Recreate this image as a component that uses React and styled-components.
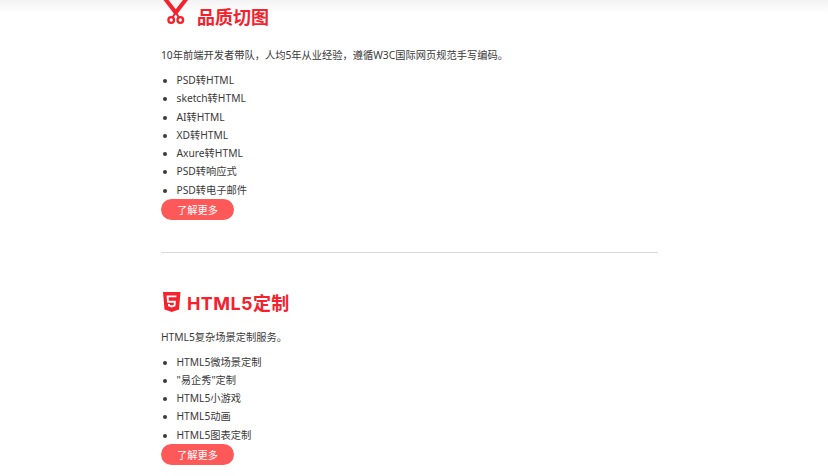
import styled, { createGlobalStyle } from 'styled-components'

const GlobalStyle = createGlobalStyle`
  html, body {
    margin: 0;
    padding: 0;
    height: 476px;
    overflow: hidden;
    background: #fff;
    font-family: "Noto Sans", "Noto Sans CJK SC", sans-serif;
    font-size: 10.25px;
    color: #3a3a3a;
  }
`

const TopShade = styled.div`
  position: absolute;
  top: 0;
  left: 0;
  right: 0;
  height: 14px;
  background: linear-gradient(to bottom, #f3f3f3, rgba(255,255,255,0));
  pointer-events: none;
`

const Page = styled.main`
  position: relative;
  width: 497px;
  margin-left: 161px;
`

const Section = styled.section`
  padding-bottom: ${props => props.$last ? '0' : '32.5px'};
  margin-bottom: ${props => props.$last ? '0' : '36px'};
  border-bottom: ${props => props.$last ? 'none' : '1px solid #d8d8d8'};
`

const Title = styled.h2`
  display: flex;
  align-items: center;
  height: ${props => props.$height}px;
  margin: 0 0 ${props => props.$gap}px;
  font-family: Inter, "Noto Sans CJK SC", sans-serif;
  font-size: 18px;
  font-weight: 700;
  letter-spacing: ${props => props.$spacing}px;
  color: #f5222d;
`

const IconSlot = styled.span`
  display: flex;
  align-self: ${props => props.$top ? 'flex-start' : 'center'};
  flex: none;
  width: ${props => props.$width}px;
  padding-left: ${props => props.$inset}px;
  box-sizing: border-box;
`

const Intro = styled.p`
  margin: 0 0 ${props => props.$gap}px;
  line-height: 18px;
`

const List = styled.ul`
  margin: 0;
  padding: 0 0 0 15.5px;
`

const Item = styled.li`
  line-height: 18.25px;
`

const MoreButton = styled.a`
  display: flex;
  align-items: center;
  justify-content: center;
  width: 73px;
  height: 21px;
  border-radius: 11px;
  background: #ff5858;
  color: #fff;
`

const ScissorsIcon = () => (
  <svg width="26" height="26" viewBox="0 0 26 26" fill="none">
    <path d="M0.5 0 L5.5 0 L14.5 11.5 L12 15 Z" fill="#f5222d" />
    <path d="M25 0 L20 0 L11 11.5 L13.5 15 Z" fill="#f5222d" />
    <path d="M12.7 12.5 L9.5 17.5 M12.7 12.5 L16 17.5" stroke="#f5222d" strokeWidth="2" />
    <circle cx="8.2" cy="20" r="2.8" stroke="#f5222d" strokeWidth="2.3" />
    <circle cx="17.3" cy="20" r="2.8" stroke="#f5222d" strokeWidth="2.3" />
  </svg>
)

const Html5Icon = () => (
  <svg width="17.5" height="20" viewBox="0 0 17.5 20">
    <path d="M0 0 H17.5 L16 17.6 L8.75 20 L1.5 17.6 Z" fill="#f5222d" />
    <path d="M13.4 4.4 H4.6 L5 9.8 H11.9 L11.5 13.6 L8.75 14.5 L6 13.6 L5.9 12" fill="none" stroke="#fff" strokeWidth="1.9" />
  </svg>
)

const sections = [
  {
    title: '品质切图',
    icon: <ScissorsIcon />,
    iconTop: true,
    height: 32,
    titleGap: 14,
    introGap: 7,
    spacing: 0,
    slot: 36,
    inset: 2,
    intro: '10年前端开发者带队，人均5年从业经验，遵循W3C国际网页规范手写编码。',
    items: ['PSD转HTML', 'sketch转HTML', 'AI转HTML', 'XD转HTML', 'Axure转HTML', 'PSD转响应式', 'PSD转电子邮件'],
  },
  {
    title: 'HTML5定制',
    icon: <Html5Icon />,
    height: 26,
    titleGap: 13,
    introGap: 6.4,
    spacing: 0.4,
    slot: 26,
    inset: 2,
    intro: 'HTML5复杂场景定制服务。',
    items: ['HTML5微场景定制', '"易企秀"定制', 'HTML5小游戏', 'HTML5动画', 'HTML5图表定制'],
    last: true,
  },
]

const App = () => (
  <>
    <GlobalStyle />
    <TopShade />
    <Page>
      {sections.map(section => (
        <Section key={section.title} $last={section.last}>
          <Title $height={section.height} $gap={section.titleGap} $spacing={section.spacing}>
            <IconSlot $top={section.iconTop} $width={section.slot} $inset={section.inset}>{section.icon}</IconSlot>
            {section.title}
          </Title>
          <Intro $gap={section.introGap}>{section.intro}</Intro>
          <List>
            {section.items.map(item => <Item key={item}>{item}</Item>)}
          </List>
          <MoreButton>了解更多</MoreButton>
        </Section>
      ))}
    </Page>
  </>
)

export default App
